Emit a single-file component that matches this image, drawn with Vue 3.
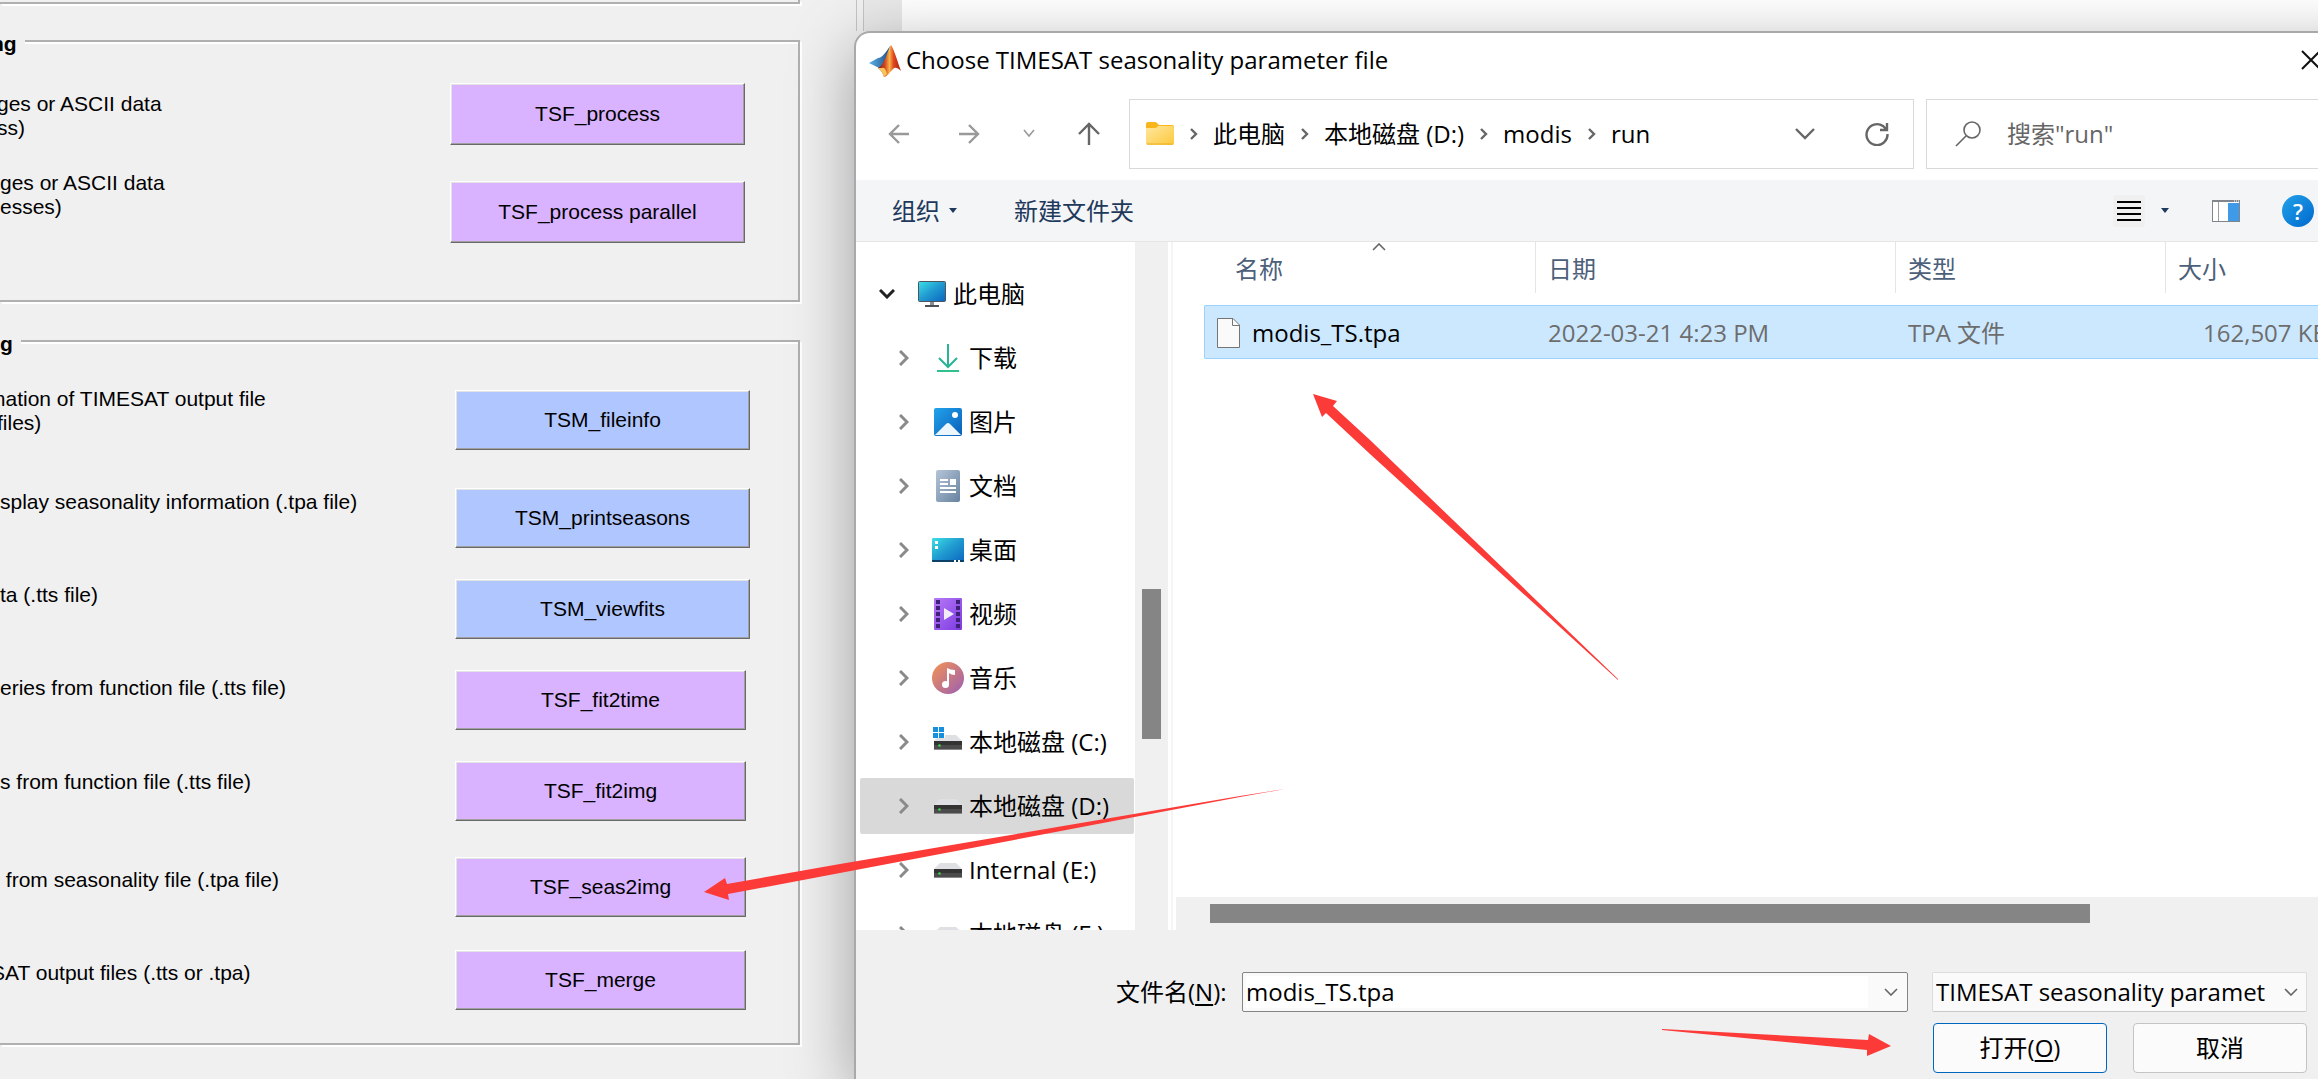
<script setup>
import { ref } from 'vue'

const fileName = ref('modis_TS.tpa')
const query = ref('')

const processTexts = [
  { lines: ['ges or ASCII data', 'ss)'], cut: 'cut-s', step: 'step-79' },
  { lines: ['ges or ASCII data', 'esses)'], cut: '', step: '' },
]
const processButtons = ['TSF_process', 'TSF_process parallel']

const postTexts = [
  { lines: ['mation of TIMESAT output file'], cut: 'cut-l', step: 'step-24' },
  { lines: ['files)'], cut: 'cut-s', step: 'step-79' },
  { lines: ['splay seasonality information (.tpa file)'], cut: '', step: 'step-93' },
  { lines: ['ta (.tts file)'], cut: '', step: 'step-93' },
  { lines: ['eries from function file (.tts file)'], cut: '', step: 'step-94' },
  { lines: ['s from function file (.tts file)'], cut: '', step: 'step-98' },
  { lines: ['\u00a0from seasonality file (.tpa file)'], cut: '', step: 'step-93' },
  { lines: ['SAT output files (.tts or .tpa)'], cut: 'cut-m', step: '' },
]
const postButtons = [
  { text: 'TSM_fileinfo', tone: 'blue', step: 'gap-l' },
  { text: 'TSM_printseasons', tone: 'blue', step: '' },
  { text: 'TSM_viewfits', tone: 'blue', step: '' },
  { text: 'TSF_fit2time', tone: 'violet', step: '' },
  { text: 'TSF_fit2img', tone: 'violet', step: 'gap-m' },
  { text: 'TSF_seas2img', tone: 'violet', step: 'gap-s' },
  { text: 'TSF_merge', tone: 'violet', step: '' },
]

const crumbs = ['此电脑', '本地磁盘 (D:)', 'modis', 'run']

const tree = [
  { icon: 'download', text: '下载' },
  { icon: 'picture', text: '图片' },
  { icon: 'document', text: '文档' },
  { icon: 'desktop', text: '桌面' },
  { icon: 'video', text: '视频' },
  { icon: 'music', text: '音乐' },
  { icon: 'system', text: '本地磁盘 (C:)' },
  { icon: 'disk', text: '本地磁盘 (D:)', active: true },
  { icon: 'disk', text: 'Internal (E:)' },
  { icon: 'disk', text: '本地磁盘 (F:)' },
]
</script>

<template>
  <div class="screen">
    <main class="tool">
      <section class="group group-top"></section>

      <section class="group group-process">
        <h2 class="legend legend-process">ng</h2>
        <div class="texts">
          <p v-for="(t, i) in processTexts" :key="i" :class="[t.cut, t.step]">
            <span v-for="l in t.lines" :key="l">{{ l }}</span>
          </p>
        </div>
        <div class="buttons">
          <button v-for="b in processButtons" :key="b" type="button" class="task violet wide">{{ b }}</button>
        </div>
      </section>

      <section class="group group-post">
        <h2 class="legend">g</h2>
        <div class="texts">
          <p v-for="(t, i) in postTexts" :key="i" :class="[t.cut, t.step]">
            <span v-for="l in t.lines" :key="l">{{ l }}</span>
          </p>
        </div>
        <div class="buttons">
          <button
            v-for="b in postButtons"
            :key="b.text"
            type="button"
            class="task"
            :class="[b.tone, b.step, { wide: b.tone === 'blue' }]"
          >{{ b.text }}</button>
        </div>
      </section>
    </main>

    <div class="stage">
      <div class="behind"><i></i><b></b></div>

      <section class="dialog" role="dialog" aria-labelledby="dialog-title">
        <header class="title-bar">
          <svg class="logo" width="32" height="32" viewBox="0 0 32 32">
            <defs>
              <linearGradient id="peak" x1="0" x2="1" y1="0" y2="0">
                <stop offset="0" stop-color="#7c1d12" />
                <stop offset=".3" stop-color="#d4451c" />
                <stop offset=".5" stop-color="#f7b24a" />
                <stop offset=".68" stop-color="#e0461e" />
                <stop offset="1" stop-color="#a81c12" />
              </linearGradient>
              <linearGradient id="wing" x1="0" x2="1" y1="0" y2="0">
                <stop offset="0" stop-color="#5cb2e8" />
                <stop offset="1" stop-color="#1d4f86" />
              </linearGradient>
            </defs>
            <path d="M0 18 L9 13 C13 13 17 7 21 1 L15 23 L10 23 L6 21 Z" fill="url(#wing)" />
            <path d="M22 0 C25 4 29 18 32 26 C28 22 26 22 24 24 C21 27 19 31 15 32 C14 28 12 25 9 23 C16 20 18 6 22 0 Z" fill="url(#peak)" />
            <path d="M13 23 C16 22 17 26 18 29 L15 32 C14 28 12 25 9 23 Z" fill="#f9c55a" />
          </svg>
          <h1 id="dialog-title">Choose TIMESAT seasonality parameter file</h1>
          <button type="button" class="plain close" aria-label="关闭">
            <svg width="20" height="20" viewBox="0 0 20 20"><path d="M1 1 L19 19 M19 1 L1 19" stroke="#111" stroke-width="2" fill="none" /></svg>
          </button>
        </header>

        <div class="nav-bar">
          <div class="history">
            <button type="button" class="plain" aria-label="后退">
              <svg width="22" height="22" viewBox="0 0 22 22"><path d="M21 11 H2 M11 2 L2 11 L11 20" class="stroke faint" /></svg>
            </button>
            <button type="button" class="plain forward" aria-label="前进">
              <svg width="22" height="22" viewBox="0 0 22 22"><path d="M1 11 H20 M11 2 L20 11 L11 20" class="stroke faint" /></svg>
            </button>
            <button type="button" class="plain" aria-label="最近">
              <svg width="12" height="22" viewBox="0 0 12 22"><path d="M1 7 L6 13 L11 7" class="stroke faint thin" /></svg>
            </button>
            <button type="button" class="plain" aria-label="上移">
              <svg width="24" height="24" viewBox="0 0 24 24"><path d="M12 23 V2 M2 12 L12 2 L22 12" class="stroke mid" /></svg>
            </button>
          </div>

          <nav class="address">
            <svg width="28" height="24" viewBox="0 0 28 24">
              <defs>
                <linearGradient id="folder" x1="0" x2="1" y1="0" y2="1">
                  <stop offset="0" stop-color="#ffe7a0" />
                  <stop offset="1" stop-color="#fdc93b" />
                </linearGradient>
              </defs>
              <path d="M0 2 Q0 0 2 0 H9 Q10 0 11 1 L13 3 H26 Q28 3 28 5 V12 H0 Z" fill="#f8b51c" />
              <rect y="4" width="28" height="19" rx="2" fill="url(#folder)" />
              <path d="M0 6 H9 Q11 6 12 4 L13 3 H0 Z" fill="#f8b51c" />
              <path d="M1 22 H27" stroke="#eeae26" stroke-width="1" />
            </svg>
            <template v-for="c in crumbs" :key="c">
              <svg class="sep" width="8" height="12" viewBox="0 0 8 12"><path d="M1 1 L6 6 L1 11" class="stroke mid" /></svg>
              <a href="#">{{ c }}</a>
            </template>
            <div class="address-end">
              <svg width="20" height="12" viewBox="0 0 20 12"><path d="M1 1 L10 10 L19 1" class="stroke mid" /></svg>
              <button type="button" class="plain" aria-label="刷新">
                <svg width="24" height="24" viewBox="0 0 24 24"><path d="M22.500 12 A10.500 10.500 0 1 1 18 4 L22 8 M22 1 V8 H15" class="stroke mid" /></svg>
              </button>
            </div>
          </nav>

          <label class="search">
            <svg width="26" height="26" viewBox="0 0 26 26"><circle cx="17" cy="9" r="8" class="stroke mid thin" /><path d="M11 15 L1 25" class="stroke mid thin" /></svg>
            <input v-model="query" type="text" placeholder="搜索&quot;run&quot;" />
          </label>
        </div>

        <div class="command-bar">
          <button type="button" class="plain command organise">组织<i class="caret"></i></button>
          <button type="button" class="plain command">新建文件夹</button>
          <div class="views">
            <button type="button" class="plain list-view" aria-label="更改视图">
              <svg width="32" height="32" viewBox="0 0 32 32"><rect width="32" height="32" rx="3" fill="#f0f0f0" /><path d="M4 7 H28 M4 13 H28 M4 19 H28 M4 25 H28" stroke="#000" stroke-width="2" /></svg>
            </button>
            <i class="caret"></i>
            <button type="button" class="plain preview" aria-label="预览窗格">
              <svg width="28" height="22" viewBox="0 0 28 22">
                <rect x=".5" y=".5" width="27" height="21" fill="#fff" stroke="#82868c" />
                <path d="M0 1 H28" stroke="#82868c" stroke-width="2" />
                <path d="M6.500 2 V21" stroke="#9a9da2" />
                <rect x="16" y="3" width="11" height="18" fill="#3f9be8" />
                <path d="M22 1 H23 M24 1 H25 M26 1 H27" stroke="#fff" />
              </svg>
            </button>
            <button type="button" class="help" aria-label="帮助">?</button>
          </div>
        </div>

        <div class="browser">
          <aside class="side">
            <ul class="tree">
              <li class="root">
                <svg width="16" height="10" viewBox="0 0 16 10"><path d="M1 1 L8 8 L15 1" fill="none" stroke="#222" stroke-width="3" /></svg>
                <svg width="28" height="26" viewBox="0 0 28 26">
                  <defs>
                    <linearGradient id="sea" x1="0" x2="1" y1="0" y2="1">
                      <stop offset="0" stop-color="#3be0e6" />
                      <stop offset=".5" stop-color="#2099d0" />
                      <stop offset="1" stop-color="#0a66bf" />
                    </linearGradient>
                  </defs>
                  <rect x="12" y="20" width="4" height="4" fill="#8a8e94" />
                  <rect x=".5" y=".5" width="27" height="20" rx="1" fill="url(#sea)" stroke="#4e555e" />
                  <rect x="7" y="24" width="14" height="2" fill="#4a4f58" />
                </svg>
                <span>此电脑</span>
              </li>
              <li v-for="n in tree" :key="n.text" :class="{ active: n.active }">
                <svg width="10" height="16" viewBox="0 0 10 16"><path d="M1 1 L8 8 L1 15" fill="none" stroke="#8a8a8a" stroke-width="3" /></svg>
                <svg width="32" height="32" viewBox="0 0 32 32">
                  <g v-if="n.icon === 'download'" fill="none" stroke="#27b495" stroke-width="2">
                    <path d="M16 2 V25 M7 16 L16 25 L25 16" /><path d="M5 29 H27" stroke="#32c08c" />
                  </g>
                  <g v-else-if="n.icon === 'picture'">
                    <linearGradient id="sky" x1="0" x2="1" y1="0" y2="1"><stop offset="0" stop-color="#22a3ec" /><stop offset="1" stop-color="#0a5eb8" /></linearGradient>
                    <rect x="2" y="2" width="28" height="28" rx="2" fill="url(#sky)" />
                    <path d="M3 29 L14 18 Q16 16 18 18 L29 29 Z" fill="#eef6fd" />
                    <circle cx="23" cy="9" r="3" fill="#fff" />
                  </g>
                  <g v-else-if="n.icon === 'document'">
                    <linearGradient id="page" x1="0" x2="1" y1="0" y2="1"><stop offset="0" stop-color="#b5c5d8" /><stop offset="1" stop-color="#67829f" /></linearGradient>
                    <rect x="4" width="24" height="32" rx="2" fill="url(#page)" />
                    <path d="M8 10 H16 M8 14 H16 M8 18 H24 M8 22 H24" stroke="#fff" stroke-width="2" />
                    <rect x="18" y="9" width="6" height="6" fill="#fff" />
                  </g>
                  <g v-else-if="n.icon === 'desktop'">
                    <rect y="4" width="32" height="24" rx="1" fill="url(#sea)" />
                    <path d="M0 26 H32 V27 Q32 28 31 28 H1 Q0 28 0 27 Z" fill="#0b3f66" />
                    <path d="M3 7 H6 V10 H3 Z M3 12 H6 V15 H3 Z M22 26 H24 V28 H22 Z M26 26 H28 V28 H26 Z" fill="#fff" />
                  </g>
                  <g v-else-if="n.icon === 'video'">
                    <linearGradient id="film" x1="0" x2="1" y1="0" y2="1"><stop offset="0" stop-color="#b779f7" /><stop offset="1" stop-color="#7c3ae0" /></linearGradient>
                    <rect x="2" width="28" height="32" rx="1" fill="url(#film)" />
                    <path d="M6 2 V30 M26 2 V30" stroke="#3f2277" stroke-width="4" stroke-dasharray="4 2" />
                    <path d="M12 10 L22 16 L12 22 Z" fill="#f2ecfb" />
                  </g>
                  <g v-else-if="n.icon === 'music'">
                    <linearGradient id="disc" x1="0" x2="1" y1="0" y2="1"><stop offset="0" stop-color="#f59352" /><stop offset="1" stop-color="#9a5fb4" /></linearGradient>
                    <circle cx="16" cy="16" r="16" fill="url(#disc)" />
                    <circle cx="13.500" cy="22.500" r="3.500" fill="#fff" />
                    <path d="M15 23 V6 Q18 8 23 8 V13 Q19 13 17 11 V23 Z" fill="#fff" />
                  </g>
                  <g v-else>
                    <path d="M8 9 H24 L30 15 H2 Z" fill="#dfe0e4" />
                    <rect x="2" y="15" width="28" height="9" fill="#4b4b4b" />
                    <rect x="2" y="15" width="28" height="4" fill="#333" />
                    <path d="M2 23.500 H30" stroke="#888" />
                    <circle cx="7.500" cy="19.500" r="1.200" fill="#3fe04f" />
                    <template v-if="n.icon === 'system'">
                      <rect x="1" y="1" width="12" height="11" fill="#fff" />
                      <path d="M1 1 H6 V6 H1 Z M7 1 H12 V6 H7 Z M1 7 H6 V12 H1 Z M7 7 H12 V12 H7 Z" fill="#1490df" />
                    </template>
                  </g>
                </svg>
                <span>{{ n.text }}</span>
              </li>
            </ul>
            <div class="side-scroll"><i></i></div>
          </aside>

          <div class="files">
            <table>
              <colgroup><col class="c-name" /><col class="c-date" /><col class="c-type" /><col /></colgroup>
              <thead>
                <tr>
                  <th class="sorted"><div>名称<svg width="14" height="8" viewBox="0 0 14 8"><path d="M1 7 L7 1 L13 7" class="stroke mid thin" /></svg></div></th>
                  <th><div>日期</div></th>
                  <th><div>类型</div></th>
                  <th><div>大小</div></th>
                </tr>
              </thead>
              <tbody>
                <tr>
                  <td>
                    <div class="file">
                      <svg width="23" height="30" viewBox="0 0 23 30"><path d="M.5 .5 H16 L22.500 7 V29.500 H.5 Z" fill="#fafafa" stroke="#757575" /><path d="M15.500 .5 V7.500 H22.500" fill="none" stroke="#757575" /></svg>
                      <span>modis_TS.tpa</span>
                    </div>
                  </td>
                  <td>2022-03-21 4:23 PM</td>
                  <td>TPA 文件</td>
                  <td class="size">162,507 KB</td>
                </tr>
              </tbody>
            </table>
            <div class="files-scroll"><i></i></div>
          </div>
        </div>

        <footer class="foot">
          <div class="fields">
            <label for="file-name">文件名(<u>N</u>):</label>
            <div class="combo">
              <input id="file-name" v-model="fileName" type="text" />
              <svg width="14" height="8" viewBox="0 0 14 8"><path d="M1 1 L7 7 L13 1" class="stroke mid thin" /></svg>
            </div>
            <div class="filter">
              <select aria-label="文件类型"><option>TIMESAT seasonality paramet</option></select>
              <svg width="14" height="8" viewBox="0 0 14 8"><path d="M1 1 L7 7 L13 1" class="stroke mid thin" /></svg>
            </div>
          </div>
          <div class="actions">
            <button type="button" class="action primary">打开(<u>O</u>)</button>
            <button type="button" class="action">取消</button>
          </div>
        </footer>
      </section>
    </div>

    <svg class="marks" width="2000" height="1079" viewBox="0 0 2000 1079" aria-hidden="true">
      <path d="M1313 394 L1337 401 L1333 406 L1370 440 L1618 679 L1618 680 L1370 454 L1326 413 L1322 417 Z" />
      <path d="M704 892 L725 878 L727 884 L840 864 L1240 796 L1285 789 L1240 797 L840 873 L728 894 L729 900 Z" />
      <path d="M1662 1029 L1868 1040 L1869 1034 L1891 1046 L1867 1056 L1867 1050 L1662 1030 Z" />
    </svg>
  </div>
</template>

<style>
body {
  margin: 0;
  overflow: hidden;
}
</style>

<style scoped>
* {
  box-sizing: border-box;
}
.screen {
  position: relative;
  display: flex;
  min-height: 100vh;
  overflow: hidden;
  background: #f0f0f0;
  color: #000;
  font-family: "Open Sans", "Noto Sans CJK SC", sans-serif;
  font-size: 24px;
  line-height: 32px;
}

/* tool window */
.tool {
  flex: none;
  width: 854px;
  font-family: "Liberation Sans", sans-serif;
  font-size: 21px;
  line-height: 24px;
}
.group {
  position: relative;
  display: flex;
  width: 800px;
  border: 2px solid #b0b0b0;
  border-left: 0;
  box-shadow: 2px 2px 0 #fff, inset 0 2px 0 #fff;
}
.group-top {
  height: 4px;
  border-top: 0;
  box-shadow: 2px 2px 0 #fff;
}
.group-process {
  height: 262px;
  margin-top: 36px;
}
.group-post {
  height: 705px;
  margin-top: 38px;
}
.legend {
  position: absolute;
  top: -10px;
  left: 0;
  margin: 0;
  padding-right: 8px;
  background: #f0f0f0;
  font-size: 21px;
  font-weight: bold;
}
.legend-process {
  left: -9px;
}
.texts {
  width: 455px;
  padding-top: 45px;
  white-space: nowrap;
}
.group-process .texts {
  width: 450px;
  padding-top: 50px;
}
.texts p {
  margin: 0;
}
.texts span {
  display: block;
}
.texts .cut-s { margin-left: -3px; }
.texts .cut-m { margin-left: -9px; }
.texts .cut-l { margin-left: -12px; }
.step-24 { height: 24px; }
.step-79 { height: 79px; }
.step-93 { height: 93px; }
.step-94 { height: 94px; }
.step-98 { height: 98px; }
.buttons {
  display: flex;
  flex-direction: column;
  align-items: flex-start;
  gap: 31px;
  padding-top: 48px;
}
.group-process .buttons {
  gap: 36px;
  padding-top: 41px;
}
.task {
  width: 291px;
  height: 60px;
  padding: 0;
  border: 1px solid;
  border-color: #fff #696969 #696969 #fff;
  color: #000;
  font: inherit;
  box-shadow: inset -1px -1px 0 #a0a0a0, inset 1px 1px 0 #e3e3e3;
}
.group-process .task {
  height: 62px;
}
.task.wide { width: 295px; }
.violet { background: #d9b3ff; }
.blue { background: #b0c6ff; }
.gap-l { margin-bottom: 7px; }
.gap-m { margin-bottom: 5px; }
.gap-s { margin-bottom: 2px; }

/* dialog: it runs on past the right edge of the screen */
.stage {
  display: flex;
  flex: 1;
  flex-direction: column;
  min-width: 0;
}
.behind {
  display: flex;
  flex: none;
  height: 31px;
  background: #fff;
}
.behind i {
  width: 8px;
  margin-left: 2px;
  border: 1px solid #c4c4c4;
  border-width: 0 1px;
  background: #f0f0f0;
  box-shadow: -2px 0 0 #f0f0f0;
}
.behind b {
  width: 38px;
  background: #e9e9e9;
}
.dialog {
  position: relative;
  display: flex;
  flex: 1;
  flex-direction: column;
  margin-right: -80px;
  padding-right: 80px;
  border: 2px solid #a9a9a9;
  border-width: 2px 0 0 2px;
  border-radius: 16px 0 0 0;
  background: #fff;
  box-shadow: 0 16px 64px rgba(0, 0, 0, 0.35);
}
.plain {
  display: flex;
  align-items: center;
  padding: 0;
  border: 0;
  background: none;
  color: inherit;
  font: inherit;
}
.stroke {
  fill: none;
  stroke-width: 2.4;
}
.thin { stroke-width: 1.6; }
.faint { stroke: #999; }
.mid { stroke: #666; }
.title-bar {
  display: flex;
  align-items: center;
  height: 54px;
  padding-left: 13px;
}
.logo {
  margin-top: 1px;
}
h1 {
  margin: 0;
  padding-left: 5px;
  font-size: 24px;
  font-weight: normal;
  white-space: nowrap;
}
.close {
  margin-left: auto;
  margin-right: -3px;
}
.nav-bar {
  display: flex;
  height: 93px;
  padding: 12px 0 11px;
}
.history {
  display: flex;
  align-items: center;
  justify-content: space-between;
  flex: none;
  width: 245px;
  margin: 0 28px 0 0;
  padding-left: 32px;
}
.forward {
  margin-left: 6px;
}
.address {
  display: flex;
  align-items: center;
  flex: 1;
  min-width: 0;
  padding: 0 24px 0 16px;
  border: 1px solid #d9d9d9;
  white-space: nowrap;
}
.address a {
  color: #000;
  text-decoration: none;
}
.sep {
  flex: none;
  margin: 0 15px 0 16px;
}
.address-end {
  display: flex;
  align-items: center;
  gap: 50px;
  margin-left: auto;
}
.search {
  display: flex;
  align-items: center;
  flex: none;
  width: 392px;
  margin-left: 12px;
  padding-left: 28px;
  border: 1px solid #d9d9d9;
  border-right: 0;
}
.search input {
  flex: 1;
  min-width: 0;
  padding: 0 0 0 26px;
  border: 0;
  outline: 0;
  background: none;
  font: inherit;
}
.search input::placeholder {
  color: #666;
  opacity: 1;
}
/* the bar's tint also fills the off-screen part of the dialog */
.command-bar {
  display: flex;
  align-items: center;
  flex: none;
  height: 62px;
  padding-left: 36px;
  border-bottom: 1px solid #e5e5e5;
  background: #f4f5f7;
  color: #1e395b;
}
.organise {
  margin-right: 57px;
}
.caret {
  border: 4px solid transparent;
  border-top: 5px solid #1e395b;
  border-bottom: 0;
}
.organise .caret {
  margin-left: 9px;
}
.views {
  display: flex;
  align-items: center;
  margin-left: auto;
  padding-right: 4px;
}
.list-view { margin-right: 16px; }
.preview { margin: 0 42px 0 43px; }
.help {
  width: 32px;
  height: 32px;
  padding: 0;
  border: 0;
  border-radius: 50%;
  background: linear-gradient(135deg, #22a2e8, #0068cf);
  color: #fff;
  font: 600 22px/32px "Open Sans", sans-serif;
}

/* folder tree and file list */
.browser {
  display: flex;
  flex: none;
  height: 688px;
}
.side {
  display: flex;
  flex: none;
  width: 317px;
  border-right: 2px solid #f5f5f5;
}
.tree {
  width: 279px;
  margin: 0;
  padding: 20px 1px 0 4px;
  overflow: hidden;
  list-style: none;
}
.tree li {
  display: flex;
  align-items: center;
  height: 56px;
  margin-bottom: 8px;
  padding-left: 39px;
  border-radius: 2px;
  white-space: nowrap;
}
.tree li svg + svg { margin-left: 23px; }
.tree span { margin-left: 5px; }
.tree .root {
  height: 64px;
  margin-bottom: 4px;
  padding-left: 19px;
}
.tree .root span { margin-left: 7px; }
.tree .active { background: #d9d9d9; }
.side-scroll {
  width: 33px;
  margin-right: 3px;
  padding: 347px 7px 0;
  background: #f0f0f0;
}
.side-scroll i {
  display: block;
  height: 150px;
  background: #858585;
}
.files {
  display: flex;
  flex: 1;
  flex-direction: column;
  justify-content: space-between;
  min-width: 0;
  overflow: hidden;
}
table {
  width: calc(100% - 31px);
  margin-left: 31px;
  border-spacing: 0;
  table-layout: fixed;
}
.c-name { width: 332px; }
.c-date { width: 360px; }
.c-type { width: 270px; }
th {
  padding: 0 0 12px;
  color: #4c607a;
  font-weight: normal;
  text-align: left;
}
th div {
  position: relative;
  height: 51px;
  padding: 11px 0 0 12px;
  border-right: 1px solid #e5e5e5;
}
th:last-child div { border-right: 0; }
.sorted div { padding-left: 31px; }
.sorted svg {
  position: absolute;
  top: 1px;
  left: 168px;
}
td {
  height: 54px;
  padding: 1px 0 0 12px;
  border: 1px solid #99d1ff;
  border-width: 1px 0;
  background: #cce8ff;
  color: #6d6d6d;
  white-space: nowrap;
  overflow: hidden;
}
td:first-child {
  border-left-width: 1px;
  border-radius: 2px 0 0 2px;
  color: #000;
}
.file {
  display: flex;
  align-items: center;
  gap: 12px;
}
td.size { padding-left: 37px; }
.files-scroll {
  height: 33px;
  margin-left: 3px;
  padding: 7px 228px 7px 34px;
  background: #f0f0f0;
}
.files-scroll i {
  display: block;
  height: 19px;
  background: #858585;
}

/* file name and actions */
.foot {
  flex: 1;
  padding: 42px 11px 6px 260px;
  background: #f0f0f0;
}
.fields {
  display: flex;
  align-items: center;
  height: 40px;
}
.fields label {
  flex: none;
  width: 126px;
  white-space: nowrap;
}
u {
  text-decoration-thickness: 2px;
  text-underline-offset: 3px;
}
.combo {
  display: flex;
  align-items: center;
  flex: 1;
  min-width: 0;
  height: 40px;
  padding-right: 9px;
  border: 1px solid #858585;
  border-radius: 2px;
  background: #fafafa;
}
.combo input {
  flex: 1;
  min-width: 0;
  height: 32px;
  margin: 0 16px 0 3px;
  padding: 0;
  border: 0;
  outline: 0;
  background: #fff;
  font: inherit;
}
.filter {
  position: relative;
  flex: none;
  width: 375px;
  height: 40px;
  margin-left: 24px;
}
.filter svg {
  position: absolute;
  top: 16px;
  right: 9px;
  pointer-events: none;
}
select {
  width: 100%;
  height: 100%;
  padding: 0 36px 0 3px;
  border: 1px solid #dcdcdc;
  border-bottom-color: #c8c8c8;
  border-radius: 2px;
  background: #fafafa;
  color: #000;
  font: inherit;
  appearance: none;
}
.actions {
  display: flex;
  justify-content: flex-end;
  gap: 26px;
  margin-top: 11px;
}
.action {
  width: 174px;
  height: 50px;
  padding: 0;
  border: 1px solid #c4c4c4;
  border-radius: 4px;
  background: #fbfbfb;
  color: #000;
  font: inherit;
}
.primary { border-color: #0067c0; }

/* red pointers over both windows */
.marks {
  position: absolute;
  top: 0;
  left: 0;
  fill: #fc3a38;
  pointer-events: none;
}
</style>
